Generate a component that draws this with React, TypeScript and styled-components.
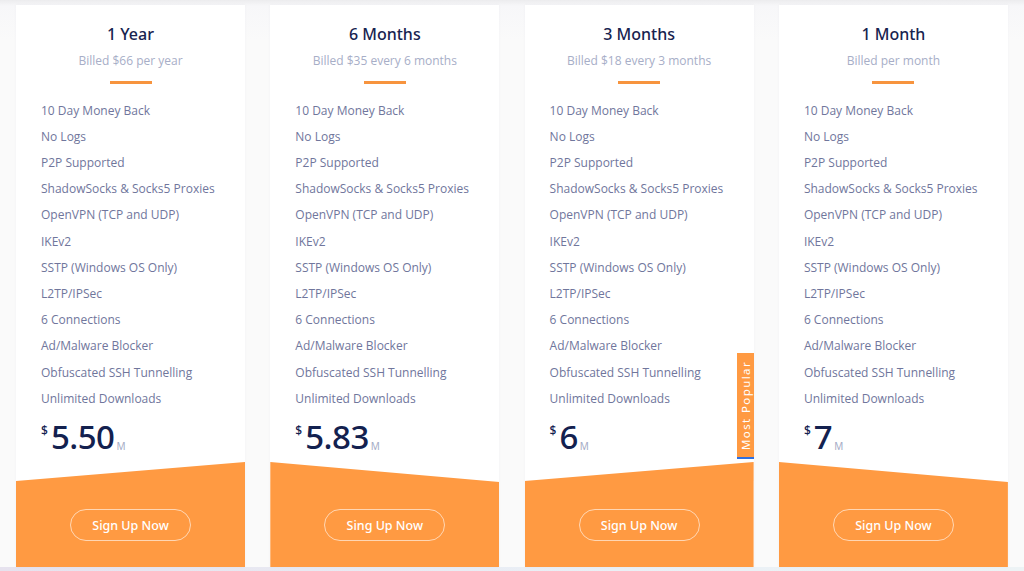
import styled, { createGlobalStyle } from 'styled-components';

const GlobalStyle = createGlobalStyle`
	body {
		margin: 0;
		background: #f6f6f8;
		font-family: 'Open Sans', 'Noto Sans', sans-serif;
	}
`;

const features = [
	'10 Day Money Back',
	'No Logs',
	'P2P Supported',
	'ShadowSocks & Socks5 Proxies',
	'OpenVPN (TCP and UDP)',
	'IKEv2',
	'SSTP (Windows OS Only)',
	'L2TP/IPSec',
	'6 Connections',
	'Ad/Malware Blocker',
	'Obfuscated SSH Tunnelling',
	'Unlimited Downloads',
];

interface Plan {
	title: string;
	billed: string;
	price: string;
	button: string;
	popular?: boolean;
}

const plans: Plan[] = [
	{ title: '1 Year', billed: 'Billed $66 per year', price: '5.50', button: 'Sign Up Now' },
	{ title: '6 Months', billed: 'Billed $35 every 6 months', price: '5.83', button: 'Sing Up Now' },
	{ title: '3 Months', billed: 'Billed $18 every 3 months', price: '6', button: 'Sign Up Now', popular: true },
	{ title: '1 Month', billed: 'Billed per month', price: '7', button: 'Sign Up Now' },
];

export default function App() {
	return (
		<>
			<GlobalStyle />
			<Page>
				{plans.map((plan, i) => (
					<Card key={plan.title}>
						<Title>{plan.title}</Title>
						<Billed>{plan.billed}</Billed>
						<Divider />
						<FeatureList>
							{features.map(f => (
								<li key={f}>{f}</li>
							))}
						</FeatureList>
						<PriceRow>
							<Currency>$</Currency>
							<Amount>{plan.price}</Amount>
							<Period>M</Period>
						</PriceRow>
						<Footer rising={i % 2 === 0}>
							<SignUp>{plan.button}</SignUp>
						</Footer>
						{plan.popular && (
							<Badge>
								<span>Most Popular</span>
							</Badge>
						)}
					</Card>
				))}
			</Page>
			<BottomLine />
		</>
	);
}

const Page = styled.div`
	height: 567px;
	box-sizing: border-box;
	padding: 5px 0 0 16px;
	display: grid;
	grid-template-columns: repeat(4, 229px);
	column-gap: 25.3px;
	background: linear-gradient(#ececee 0, #f7f7f9 6px, #fafafa 40px);
`;

const Card = styled.div`
	position: relative;
	display: flex;
	flex-direction: column;
	align-items: center;
	background: #fff;
	box-shadow: 0 0 3px rgba(30, 40, 80, 0.04);
`;

const Title = styled.h3`
	margin: 17px 0 0;
	font-family: 'Noto Sans', 'Inter', sans-serif;
	font-weight: 500;
	font-size: 16px;
	line-height: 24px;
	color: #17234f;
`;

const Billed = styled.p`
	margin: 6px 0 0;
	font-size: 12px;
	line-height: 18px;
	color: #a7aec7;
`;

const Divider = styled.div`
	width: 42px;
	height: 2.5px;
	margin-top: 11px;
	background: #f7943e;
`;

const FeatureList = styled.ul`
	align-self: stretch;
	list-style: none;
	margin: 14px 0 0;
	padding: 0 0 0 25px;

	li {
		font-size: 12px;
		line-height: 26.2px;
		color: #70769c;
	}
`;

const PriceRow = styled.div`
	align-self: stretch;
	display: flex;
	align-items: flex-start;
	margin-top: 5px;
	padding-left: 25px;
	height: 40px;
	color: #13214f;
	font-family: 'Noto Sans', 'Inter', sans-serif;
`;

const Currency = styled.span`
	font-size: 12px;
	font-weight: 500;
	line-height: 12px;
	margin-top: 8px;
	margin-right: 3px;
`;

const Amount = styled.span`
	font-size: 33px;
	font-weight: 500;
	line-height: 40px;
	letter-spacing: -0.5px;
`;

const Period = styled.span`
	align-self: flex-end;
	font-size: 10px;
	line-height: 10px;
	margin: 0 0 6px 2px;
	color: #a5acc6;
`;

const Footer = styled.div<{ rising: boolean }>`
	align-self: stretch;
	margin-top: auto;
	height: 105px;
	padding-top: 47px;
	box-sizing: border-box;
	display: flex;
	justify-content: center;
	align-items: flex-start;
	background: #ff9a42;
	clip-path: ${p =>
		p.rising
			? 'polygon(0 19px, 100% 0, 100% 100%, 0 100%)'
			: 'polygon(0 0, 100% 20px, 100% 100%, 0 100%)'};
`;

const SignUp = styled.button`
	width: 121px;
	height: 32px;
	border: 1px solid rgba(255, 255, 255, 0.6);
	border-radius: 16px;
	background: transparent;
	color: #fff;
	font-family: 'Noto Sans', 'Inter', sans-serif;
	font-weight: 500;
	font-size: 12.5px;
	cursor: pointer;
`;

const Badge = styled.div`
	position: absolute;
	right: 0;
	top: 348px;
	width: 17px;
	height: 104px;
	background: #ff9a42;
	border-bottom: 2px solid #2f6fe0;
	display: flex;
	align-items: center;
	justify-content: center;

	span {
		transform: rotate(-90deg);
		white-space: nowrap;
		color: #fff;
		font-size: 11.5px;
		letter-spacing: 1.4px;
		font-family: 'Noto Sans', sans-serif;
	}
`;

const BottomLine = styled.div`
	height: 4px;
	background: linear-gradient(90deg, #e6e2ee, #eaf0f6 60%, #edf3f5);
`;
